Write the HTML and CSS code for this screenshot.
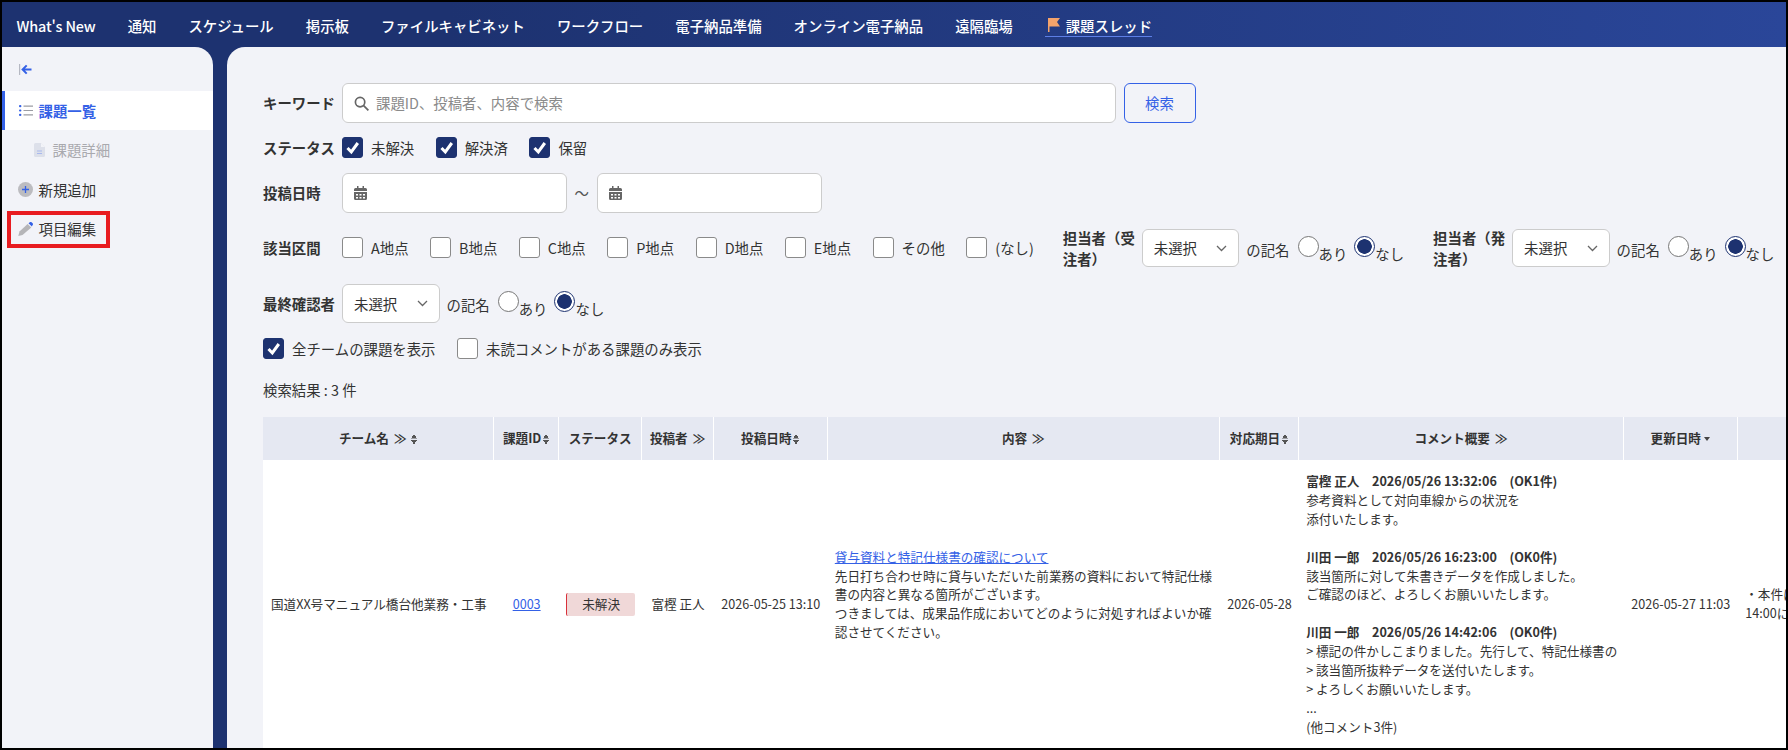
FILE: index.html
```html
<!DOCTYPE html>
<html lang="ja">
<head>
<meta charset="utf-8">
<title>課題スレッド</title>
<link rel="stylesheet" href="styles.css">
</head>
<body>
<div class="app">
  <header class="topbar">
    <a class="nav-item nav-latin">What's New</a>
    <a class="nav-item">通知</a>
    <a class="nav-item">スケジュール</a>
    <a class="nav-item">掲示板</a>
    <a class="nav-item">ファイルキャビネット</a>
    <a class="nav-item">ワークフロー</a>
    <a class="nav-item">電子納品準備</a>
    <a class="nav-item">オンライン電子納品</a>
    <a class="nav-item">遠隔臨場</a>
    <a class="nav-item nav-current">
      <svg class="flag" viewBox="0 0 12 14" width="12" height="14"><path d="M0 0h12l-3 4 3 4.500H1.500V14H0z" fill="#f4a36b"/></svg>
      課題スレッド
    </a>
  </header>
  <div class="body-row">
    <aside class="sidebar">
      <div class="collapse">
        <svg viewBox="0 0 13 11" width="13" height="11"><path d="M.6 0v11" stroke="#b5b8c2" stroke-width="1.200" fill="none"/><path d="M12.500 5.500H4.200M7.700 1.400 3.600 5.500l4.100 4.100" stroke="#3461e6" stroke-width="2" fill="none"/></svg>
      </div>
      <div class="side-item side-active">
        <svg viewBox="0 0 14 11" width="14" height="11"><g fill="#3461e6"><rect y="0" width="2.400" height="2.200" rx="1"/><rect y="4.400" width="2.400" height="2.200" rx="1"/><rect y="8.800" width="2.400" height="2.200" rx="1"/></g><path d="M4.500 1.100H14M4.500 5.500H14M4.500 9.900H14" stroke="#9a9ca3" stroke-width="1.100"/></svg>
        <span>課題一覧</span>
      </div>
      <div class="side-item side-sub">
        <svg viewBox="0 0 11 14" width="11" height="14"><path d="M1.500 0H7l4 4v8.500A1.500 1.500 0 0 1 9.500 14h-8A1.500 1.500 0 0 1 0 12.500v-11A1.500 1.500 0 0 1 1.500 0z" fill="#dde0ea"/><path d="M7 0v4h4z" fill="#f2f3f8"/><path d="M3 8h5M3 10.500h5" stroke="#a9b9ee" stroke-width="1"/></svg>
        <span>課題詳細</span>
      </div>
      <div class="side-item side-add">
        <svg viewBox="0 0 15 15" width="15" height="15"><circle cx="7.500" cy="7.500" r="7.500" fill="#bcbcc0"/><path d="M7.500 4v7M4 7.500h7" stroke="#3461e6" stroke-width="1.300"/></svg>
        <span>新規追加</span>
      </div>
      <div class="side-item side-marked">
        <svg viewBox="0 0 15 14" width="15" height="14"><path d="M9.600 2 13.300 5.400 4.500 13 .3 14l1.200-4.500z" fill="#b5b5b8"/><path d="M10.500 1.300 11.800.3a1.300 1.300 0 0 1 1.800 0l1 1a1.300 1.300 0 0 1 0 1.800l-.7 1.300z" fill="#3461e6"/></svg>
        <span>項目編集</span>
        <div class="annotation"></div>
      </div>
    </aside>

    <main class="content">
      <div class="row row-keyword">
        <label class="f-label">キーワード</label>
        <div class="search-box">
          <svg viewBox="0 0 16 16" width="15" height="15"><circle cx="6.500" cy="6.500" r="5" fill="none" stroke="#666" stroke-width="1.800"/><path d="m10.300 10.300 5 5" stroke="#666" stroke-width="1.900"/></svg>
          <input class="search-input" type="text" placeholder="課題ID、投稿者、内容で検索">
        </div>
        <button class="search-btn">検索</button>
      </div>

      <div class="row row-status">
        <label class="f-label">ステータス</label>
        <div class="check-group check-group-status">
          <span class="check"><span class="box box-on"><svg viewBox="0 0 21 21" width="21" height="21"><path d="m5.500 11 3.800 4 6.500-9" fill="none" stroke="#fff" stroke-width="3"/></svg></span>未解決</span>
          <span class="check"><span class="box box-on"><svg viewBox="0 0 21 21" width="21" height="21"><path d="m5.500 11 3.800 4 6.500-9" fill="none" stroke="#fff" stroke-width="3"/></svg></span>解決済</span>
          <span class="check"><span class="box box-on"><svg viewBox="0 0 21 21" width="21" height="21"><path d="m5.500 11 3.800 4 6.500-9" fill="none" stroke="#fff" stroke-width="3"/></svg></span>保留</span>
        </div>
      </div>

      <div class="row row-date">
        <label class="f-label">投稿日時</label>
        <div class="date-box">
          <svg viewBox="0 0 13 14" width="13" height="14"><path d="M1.500 2H3V0h1.500v2h4V0H10v2h1.500A1.500 1.500 0 0 1 13 3.500V5H0V3.500A1.500 1.500 0 0 1 1.500 2zM0 6h13v6.500a1.500 1.500 0 0 1-1.500 1.500h-10A1.500 1.500 0 0 1 0 12.500z" fill="#666"/><path d="M2 8h2v1.500H2zM5.500 8h2v1.500h-2zM9 8h2v1.500H9zM2 11h2v1.500H2zM5.500 11h2v1.500h-2zM9 11h2v1.500H9z" fill="#fff"/></svg>
        </div>
        <span class="tilde">～</span>
        <div class="date-box">
          <svg viewBox="0 0 13 14" width="13" height="14"><path d="M1.500 2H3V0h1.500v2h4V0H10v2h1.500A1.500 1.500 0 0 1 13 3.500V5H0V3.500A1.500 1.500 0 0 1 1.500 2zM0 6h13v6.500a1.500 1.500 0 0 1-1.500 1.500h-10A1.500 1.500 0 0 1 0 12.500z" fill="#666"/><path d="M2 8h2v1.500H2zM5.500 8h2v1.500h-2zM9 8h2v1.500H9zM2 11h2v1.500H2zM5.500 11h2v1.500h-2zM9 11h2v1.500H9z" fill="#fff"/></svg>
        </div>
      </div>

      <div class="row row-section">
        <label class="f-label">該当区間</label>
        <div class="check-group">
          <span class="check"><span class="box"></span>A地点</span>
          <span class="check"><span class="box"></span>B地点</span>
          <span class="check"><span class="box"></span>C地点</span>
          <span class="check"><span class="box"></span>P地点</span>
          <span class="check"><span class="box"></span>D地点</span>
          <span class="check"><span class="box"></span>E地点</span>
          <span class="check"><span class="box"></span>その他</span>
          <span class="check"><span class="box"></span>(なし)</span>
        </div>
        <div class="signer signer-a">
          <label class="signer-label">担当者（受注者）</label>
          <div class="select">未選択<svg viewBox="0 0 11 7" width="11" height="7"><path d="m1 1 4.500 4.500L10 1" fill="none" stroke="#666" stroke-width="1.300"/></svg></div>
          <span class="sign-text">の記名</span>
          <span class="radio"><span class="dot"></span><span class="radio-text">あり</span></span>
          <span class="radio"><span class="dot dot-on"></span><span class="radio-text">なし</span></span>
        </div>
        <div class="signer signer-b">
          <label class="signer-label">担当者（発注者）</label>
          <div class="select">未選択<svg viewBox="0 0 11 7" width="11" height="7"><path d="m1 1 4.500 4.500L10 1" fill="none" stroke="#666" stroke-width="1.300"/></svg></div>
          <span class="sign-text">の記名</span>
          <span class="radio"><span class="dot"></span><span class="radio-text">あり</span></span>
          <span class="radio"><span class="dot dot-on"></span><span class="radio-text">なし</span></span>
        </div>
      </div>

      <div class="row row-final">
        <label class="f-label">最終確認者</label>
        <div class="signer">
          <div class="select">未選択<svg viewBox="0 0 11 7" width="11" height="7"><path d="m1 1 4.500 4.500L10 1" fill="none" stroke="#666" stroke-width="1.300"/></svg></div>
          <span class="sign-text">の記名</span>
          <span class="radio"><span class="dot"></span><span class="radio-text">あり</span></span>
          <span class="radio"><span class="dot dot-on"></span><span class="radio-text">なし</span></span>
        </div>
      </div>

      <div class="row row-options">
        <div class="check-group check-group-options">
          <span class="check"><span class="box box-on"><svg viewBox="0 0 21 21" width="21" height="21"><path d="m5.500 11 3.800 4 6.500-9" fill="none" stroke="#fff" stroke-width="3"/></svg></span>全チームの課題を表示</span>
          <span class="check"><span class="box"></span>未読コメントがある課題のみ表示</span>
        </div>
      </div>

      <div class="result-count">検索結果 : 3 件</div>

      <div class="table-wrap">
        <table class="issues">
          <colgroup>
            <col class="c-team"><col class="c-id"><col class="c-status"><col class="c-author"><col class="c-date"><col class="c-body"><col class="c-due"><col class="c-comment"><col class="c-updated"><col class="c-note">
          </colgroup>
          <thead>
            <tr>
              <th>チーム名<span class="more">≫</span><span class="sort"></span></th>
              <th>課題ID<span class="sort"></span></th>
              <th>ステータス</th>
              <th>投稿者<span class="more">≫</span></th>
              <th>投稿日時<span class="sort"></span></th>
              <th>内容<span class="more">≫</span></th>
              <th>対応期日<span class="sort"></span></th>
              <th>コメント概要<span class="more">≫</span></th>
              <th>更新日時<span class="sort-down"></span></th>
              <th></th>
            </tr>
          </thead>
          <tbody>
            <tr>
              <td class="team">国道XX号マニュアル橋台他業務・工事</td>
              <td class="center"><a class="link">0003</a></td>
              <td class="center"><span class="badge">未解決</span></td>
              <td class="center">富樫 正人</td>
              <td class="center">2026-05-25 13:10</td>
              <td><a class="link">貸与資料と特記仕様書の確認について</a><br>先日打ち合わせ時に貸与いただいた前業務の資料において特記仕様書の内容と異なる箇所がございます。<br>つきましては、成果品作成においてどのように対処すればよいか確認させてください。<br><br></td>
              <td class="center">2026-05-28</td>
              <td class="comment">
                <b>富樫 正人　2026/05/26 13:32:06　(OK1件)</b><br>参考資料として対向車線からの状況を<br>添付いたします。<br><br>
                <b>川田 一郎　2026/05/26 16:23:00　(OK0件)</b><br>該当箇所に対して朱書きデータを作成しました。<br>ご確認のほど、よろしくお願いいたします。<br><br>
                <b>川田 一郎　2026/05/26 14:42:06　(OK0件)</b><br>&gt; 標記の件かしこまりました。先行して、特記仕様書の<br>&gt; 該当箇所抜粋データを送付いたします。<br>&gt; よろしくお願いいたします。<br>...<br>(他コメント3件)
              </td>
              <td class="center">2026-05-27 11:03</td>
              <td class="note">・本件につきまして<br>14:00に確認いたします。</td>
            </tr>
          </tbody>
        </table>
      </div>
    </main>
  </div>
</div>
</body>
</html>
```

FILE: styles.css
```css
* { box-sizing: border-box; }
html, body { margin: 0; height: 100%; overflow: hidden; }
body {
  font-family: "Noto Sans CJK JP", "Noto Sans", sans-serif;
  font-size: 14.400px;
  line-height: 1.5;
  color: #333;
}
.app {
  height: 750px;
  border: 2px solid #000;
  display: flex;
  flex-direction: column;
  background: #1d3270;
  overflow: hidden;
}

/* top navigation */
.topbar {
  flex: none;
  height: 45px;
  display: flex;
  align-items: center;
  gap: 32px;
  padding: 3px 0 0 14.500px;
  background: linear-gradient(90deg, #1d3270 0%, #1d3270 25%, #2a4699 100%);
}
.nav-item {
  color: #fff;
  font-weight: 500;
  white-space: nowrap;
}
.nav-latin { letter-spacing: -0.150px; }
.nav-current {
  display: flex;
  align-items: center;
  gap: 6px;
  padding-left: 3px;
  border-bottom: 1px solid #5d7fe6;
  line-height: 21px;
}
.flag { margin-top: -2px; }

.body-row { flex: 1; display: flex; gap: 14px; min-height: 0; }

/* sidebar */
.sidebar {
  flex: none;
  width: 211px;
  background: #f2f3f8;
  border-top-right-radius: 18px;
  padding-top: 16px;
}
.collapse { height: 12px; padding-left: 17px; display: flex; align-items: center; margin-bottom: 16px; }
.side-item {
  position: relative;
  height: 39px;
  display: flex;
  align-items: center;
  gap: 5.500px;
  padding-left: 13px;
  border-left: 3px solid transparent;
}
.side-item svg { flex: none; }
.side-active {
  background: #fff;
  border-left-color: #3461e6;
  padding-left: 14px;
  color: #3461e6;
  font-weight: 700;
}
.side-sub { padding-left: 29px; color: #a9a9ae; gap: 7.500px; }
.side-add { margin-top: 1px; }
.side-marked { margin-top: 0.500px; }
.annotation {
  position: absolute;
  left: 2px;
  top: 1.500px;
  width: 103px;
  height: 37px;
  border: 4px solid #e81c20;
}

/* filter form */
.content {
  flex: 1;
  min-width: 0;
  background: #f2f3f8;
  border-top-left-radius: 18px;
  padding: 36px 0 0 36px;
  overflow: hidden;
}
.row { display: flex; align-items: center; }
.row-status { margin-top: 14px; height: 22px; }
.row-date { margin-top: 14px; }
.row-section { margin-top: 16px; height: 38px; }
.row-final { margin-top: 17px; height: 39px; }
.row-options { margin-top: 15px; height: 21px; }
.f-label {
  flex: none;
  width: 79px;
  font-weight: 700;
  white-space: nowrap;
}
.search-box {
  width: 774px;
  height: 40px;
  background: #fff;
  border: 1px solid #ccc;
  border-radius: 6px;
  display: flex;
  align-items: center;
  gap: 7px;
  padding-left: 11px;
}
.search-input {
  flex: 1;
  border: 0;
  outline: 0;
  background: transparent;
  font: inherit;
  padding: 0;
  color: #333;
}
.search-input::placeholder { color: #8a8a8a; opacity: 1; }
.search-btn {
  margin-left: 7.500px;
  width: 72px;
  height: 40px;
  background: transparent;
  border: 1px solid #3461e6;
  border-radius: 6px;
  color: #3461e6;
  font: inherit;
  padding: 0;
}
.check-group { display: flex; align-items: center; gap: 21.500px; }
.check-group-status .check { min-width: 72px; }
.check { display: flex; align-items: center; gap: 8px; white-space: nowrap; }
.box {
  flex: none;
  width: 21px;
  height: 21px;
  background: #fff;
  border: 1px solid #8a8a8a;
  border-radius: 3px;
  display: block;
  overflow: hidden;
}
.box svg { display: block; margin: -1px; }
.box-on { background: #1d3270; border-color: #1d3270; }
.date-box {
  width: 225px;
  height: 40px;
  background: #fff;
  border: 1px solid #ccc;
  border-radius: 6px;
  display: flex;
  align-items: center;
  padding-left: 11px;
}
.tilde { width: 29.500px; text-align: center; color: #555; flex: none; }
.signer { display: flex; align-items: center; }
.signer-a { margin-left: 29px; }
.signer-b { margin-left: 22px; }
.signer-label {
  flex: none;
  width: 79px;
  font-weight: 700;
  line-height: 21px;
}
.select {
  flex: none;
  width: 97.500px;
  height: 38.500px;
  background: #fff;
  border: 1px solid #ccc;
  border-radius: 6px;
  padding: 0 11px;
  display: flex;
  align-items: center;
  justify-content: space-between;
}
.sign-text { margin: 3px 8px 0 7px; white-space: nowrap; }
.radio { display: flex; align-items: flex-start; height: 21px; margin-right: 7px; }
.dot {
  flex: none;
  width: 21px;
  height: 21px;
  border: 1px solid #777;
  border-radius: 50%;
  background: #fff;
  display: block;
  margin-top: -2px;
}
.dot-on {
  border: 1px solid #1d3270;
  background: radial-gradient(circle, #1d3270 0, #1d3270 7px, #fff 7.500px);
}
.radio-text { margin-top: 5px; line-height: 21px; white-space: nowrap; }
.result-count { margin-top: 22px; line-height: 18px; }

/* table */
.table-wrap { margin-top: 18px; overflow: hidden; }
.issues {
  width: 1600px;
  table-layout: fixed;
  border-collapse: separate;
  border-spacing: 0;
  font-size: 12.600px;
  line-height: 18.900px;
}
.c-team { width: 231.400px; }
.c-id { width: 64.500px; }
.c-status { width: 83.500px; }
.c-author { width: 71.400px; }
.c-date { width: 114px; }
.c-body { width: 392px; }
.c-due { width: 79.400px; }
.c-comment { width: 324.600px; }
.c-updated { width: 114px; }
.c-note { width: 125.200px; }
.issues th {
  height: 43px;
  padding: 0;
  background: #e5e8f2;
  border-right: 1.500px solid #fff;
  font-weight: 700;
  text-align: center;
  white-space: nowrap;
}
.more { font-weight: 700; margin-left: 5px; }
.sort {
  display: inline-block;
  width: 6px;
  height: 10px;
  margin-left: 2px;
  vertical-align: -1px;
  background:
    linear-gradient(to bottom right, transparent 50%, #555 50%) 0 0 / 3px 4.500px no-repeat,
    linear-gradient(to bottom left, transparent 50%, #555 50%) 3px 0 / 3px 4.500px no-repeat,
    linear-gradient(to top right, transparent 50%, #555 50%) 0 5.500px / 3px 4.500px no-repeat,
    linear-gradient(to top left, transparent 50%, #555 50%) 3px 5.500px / 3px 4.500px no-repeat;
}
.more + .sort { margin-left: 5px; }
.sort-down {
  display: inline-block;
  width: 0;
  height: 0;
  margin-left: 3px;
  vertical-align: 2px;
  border-left: 3px solid transparent;
  border-right: 3px solid transparent;
  border-top: 4.500px solid #444;
}
.issues td {
  background: #fff;
  padding: 12px 5px 12px 7px;
  vertical-align: middle;
}
.issues td.team { padding-left: 8px; }
.issues td.center { text-align: center; padding-left: 0; padding-right: 0; white-space: nowrap; }
.issues td.note { padding-left: 7.500px; white-space: nowrap; }
.link { color: #3461e6; text-decoration: underline; }
.badge {
  display: inline-block;
  width: 69px;
  height: 22.500px;
  line-height: 22.500px;
  background: #f0d8d8;
  border-left: 1px solid #d8303a;
  border-radius: 2px;
  text-align: center;
}
```
